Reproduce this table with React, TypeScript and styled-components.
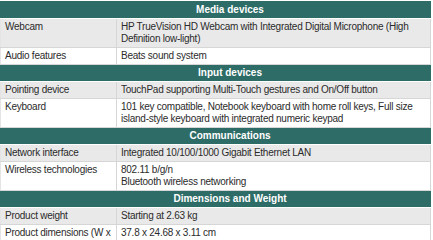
import React from "react";
import styled, { createGlobalStyle } from "styled-components";

const Global = createGlobalStyle`
  html, body { margin: 0; padding: 0; background: #ffffff; }
  body { font-family: "Liberation Sans", Arial, Helvetica, sans-serif; }
`;

const Table = styled.table`
  width: 431px;
  border-collapse: collapse;
  margin-top: 1px;
  font-family: "Liberation Sans", Arial, Helvetica, sans-serif;
  font-size: 10px;
  line-height: 12px;
  color: #2b2b2b;
  table-layout: fixed;
`;

const HeaderCell = styled.th`
  background: #2e6c67;
  color: #ffffff;
  font-weight: bold;
  font-size: 10px;
  line-height: 12px;
  text-align: center;
  height: 16px;
  padding: 0 0 0 29px;
  border: 1px solid #2e6c67;
  border-bottom: 1px solid #ffffff;
`;

const Row = styled.tr<{ $shade: boolean }>`
  background: ${(p) => (p.$shade ? "#e9e9e9" : "#ffffff")};
`;

const LabelCell = styled.td`
  vertical-align: top;
  padding: 2px 4px 2px 4px;
  letter-spacing: -0.25px;
  border: 1px solid #d6d6d6;
  border-left: 1px solid #e4e4e4;
`;

const ValueCell = styled.td`
  vertical-align: top;
  padding: 2px 4px 2px 4px;
  letter-spacing: -0.25px;
  border: 1px solid #d6d6d6;
`;

type Item = { label: string; value: React.ReactNode };
type Section = { title: string; items: Item[] };

const sections: Section[] = [
  {
    title: "Media devices",
    items: [
      {
        label: "Webcam",
        value:
          "HP TrueVision HD Webcam with Integrated Digital Microphone (High Definition low-light)",
      },
      { label: "Audio features", value: "Beats sound system" },
    ],
  },
  {
    title: "Input devices",
    items: [
      {
        label: "Pointing device",
        value: "TouchPad supporting Multi-Touch gestures and On/Off button",
      },
      {
        label: "Keyboard",
        value:
          "101 key compatible, Notebook keyboard with home roll keys, Full size island-style keyboard with integrated numeric keypad",
      },
    ],
  },
  {
    title: "Communications",
    items: [
      { label: "Network interface", value: "Integrated 10/100/1000 Gigabit Ethernet LAN" },
      {
        label: "Wireless technologies",
        value: (
          <>
            802.11 b/g/n
            <br />
            Bluetooth wireless networking
          </>
        ),
      },
    ],
  },
  {
    title: "Dimensions and Weight",
    items: [
      { label: "Product weight", value: "Starting at 2.63 kg" },
      { label: "Product dimensions (W x D x H)", value: "37.8 x 24.68 x 3.11 cm" },
    ],
  },
];

export default function App() {
  return (
    <>
      <Global />
      <Table>
        <colgroup>
          <col style={{ width: 116 }} />
          <col />
        </colgroup>
        <tbody>
          {sections.map((s) => (
            <React.Fragment key={s.title}>
              <tr>
                <HeaderCell colSpan={2}>{s.title}</HeaderCell>
              </tr>
              {s.items.map((it, i) => (
                <Row key={it.label} $shade={i % 2 === 0}>
                  <LabelCell>{it.label}</LabelCell>
                  <ValueCell>{it.value}</ValueCell>
                </Row>
              ))}
            </React.Fragment>
          ))}
        </tbody>
      </Table>
    </>
  );
}
